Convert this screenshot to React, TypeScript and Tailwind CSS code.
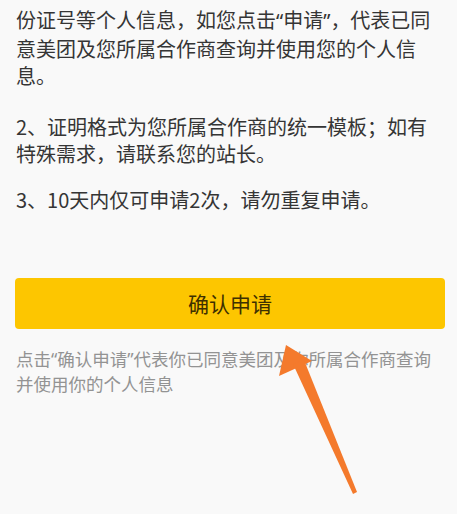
import React from "react";

const font = { fontFamily: '"Noto Sans CJK SC", "Noto Sans", sans-serif' };

function Q({ c }: { c: string }) {
  return <span className="font-['Noto_Sans',sans-serif]">{c}</span>;
}

export default function App() {
  return (
    <div
      className="relative h-[514px] w-[457px] overflow-hidden bg-[#f9f9f9]"
      style={font}
    >
      <div className="pl-[16px] pr-[10px] pt-[6px] text-[20px] leading-[27.5px] text-[#353535]">
        <p className="whitespace-nowrap">
          份证号等个人信息，如您点击<Q c="“" />申请<Q c="”" />，代表已同
          <br />
          意美团及您所属合作商查询并使用您的个人信
          <br />
          息。
        </p>
        <p className="mt-[23px] whitespace-nowrap">
          2、证明格式为您所属合作商的统一模板；如有
          <br />
          特殊需求，请联系您的站长。
        </p>
        <p className="mt-[18px] whitespace-nowrap">
          3、10天内仅可申请2次，请勿重复申请。
        </p>
      </div>

      <button className="ml-[15px] mt-[65px] flex h-[51px] w-[430px] items-center justify-center rounded-[4px] bg-[#fdc600] text-[21px] text-[#3d3000]">
        确认申请
      </button>

      <p className="ml-[16px] mt-[18px] whitespace-nowrap text-[17.5px] leading-[23.5px] text-[#939393]">
        点击<Q c="“" />确认申请<Q c="”" />代表你已同意美团及你所属合作商查询
        <br />
        并使用你的个人信息
      </p>

      <svg
        className="pointer-events-none absolute left-0 top-0"
        width="457"
        height="514"
        viewBox="0 0 457 514"
      >
        <polygon points="286,345 279,376 312,361" fill="#f47a2c" />
        <polygon points="293,364 304,360 357,492 353,494" fill="#f47a2c" />
      </svg>
    </div>
  );
}
